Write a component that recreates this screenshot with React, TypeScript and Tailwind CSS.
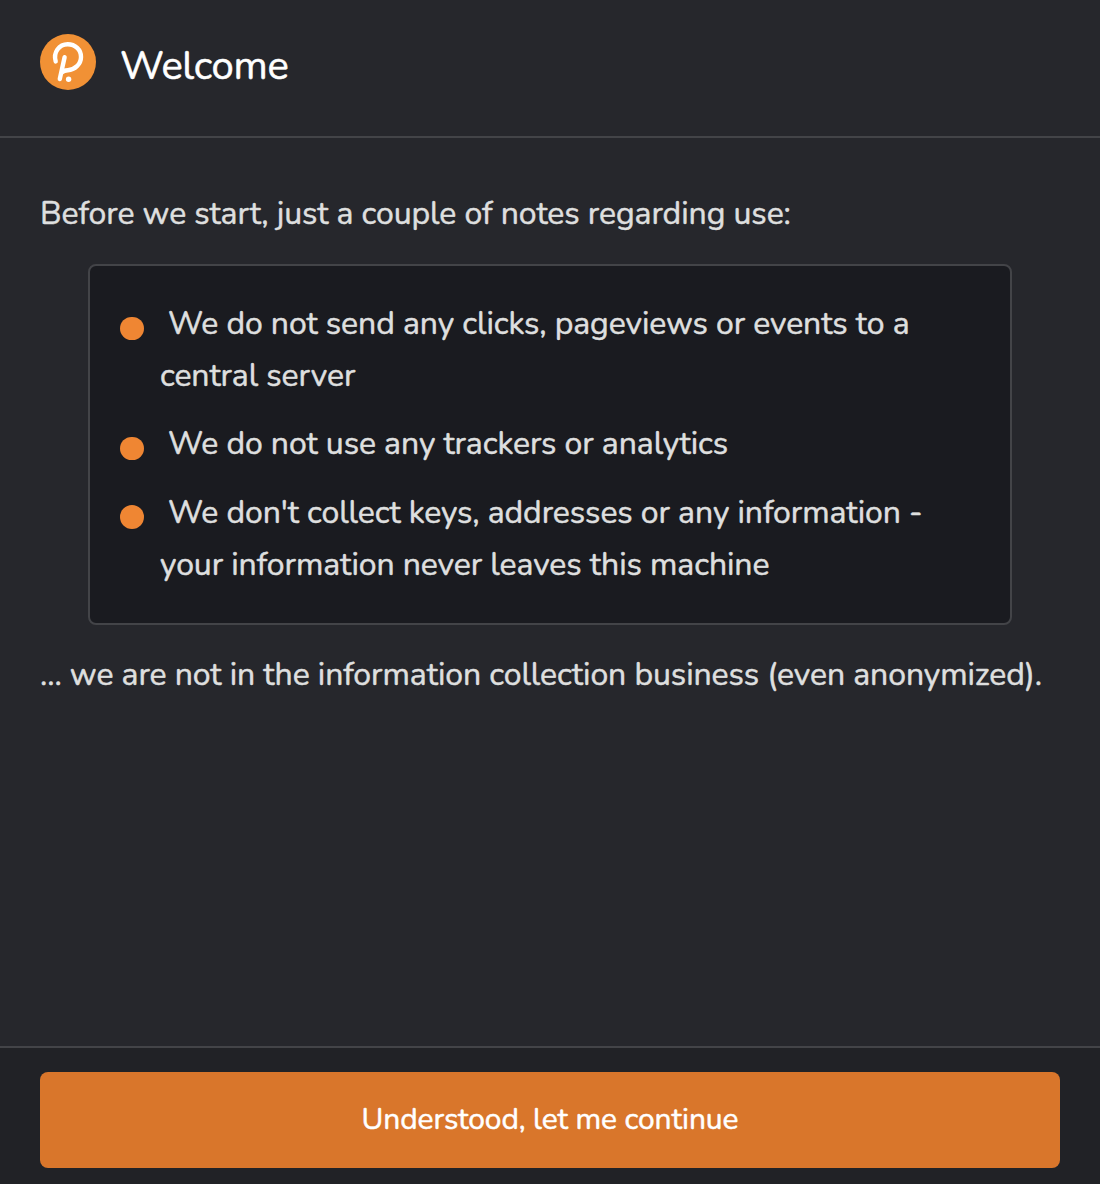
const notes = [
  ['We do not send any clicks, pageviews or events to a', 'central server'],
  ['We do not use any trackers or analytics'],
  ["We don't collect keys, addresses or any information -", 'your information never leaves this machine'],
];

function Logo() {
  return (
    <svg width="56" height="56" viewBox="0 0 56 56" fill="none" className="block shrink-0">
      <circle cx="28" cy="28" r="28" fill="#f19135" />
      <path
        d="M15.7 27.4C13 18.5 19 10.3 27.7 10.3C35.3 10.3 41 15.8 41 23C41 30.3 34.8 35.8 27.8 36.2C25 36.4 23 37.2 21.8 38.6M24.6 23.2L19.8 45"
        stroke="#fff"
        strokeWidth="4.4"
        strokeLinecap="round"
        strokeLinejoin="round"
      />
      <circle cx="28.6" cy="45.2" r="2.7" fill="#fff" />
    </svg>
  );
}

export default function App() {
  return (
    <div className="flex h-[1184px] w-[1100px] flex-col bg-[#26272c] font-[Nunito,Lato,sans-serif] text-[32px] leading-[52px] tracking-[-0.08px] text-[#dedfdf] [-webkit-text-stroke:0.5px_currentColor]">
      <header className="flex h-[138px] shrink-0 items-start gap-6 border-b-2 border-[#434448] px-10 pt-[34px]">
        <Logo />
        <h1 className="pt-1.5 text-[40px] font-normal tracking-[-0.3px] text-white">Welcome</h1>
      </header>
      <main className="flex-1 whitespace-nowrap px-10 pt-[50px]">
        <p>Before we start, just a couple of notes regarding use:</p>
        <ul className="mx-12 mt-6 flex h-[361px] flex-col gap-[16.4px] rounded-lg border-2 border-[#434448] bg-[#1a1b20] pl-[30px] pt-8">
          {notes.map((lines) => (
            <li key={lines[0]} className="flex">
              <span className="mt-[18.5px] mr-[16.5px] size-[23.5px] shrink-0 rounded-full bg-[#ef8633]" />
              <div>
                {lines.map((line, i) => (
                  <p key={line} className={i === 0 ? 'pl-2' : ''}>{line}</p>
                ))}
              </div>
            </li>
          ))}
        </ul>
        <p className="mt-6">... we are not in the information collection business (even anonymized).</p>
      </main>
      <footer className="flex h-[138px] shrink-0 flex-col border-t-2 border-[#434448] bg-[#212226] px-10 pt-6">
        <button className="h-24 rounded-lg bg-[#d9762b] text-[30px] tracking-[-0.12px] text-white">Understood, let me continue</button>
      </footer>
    </div>
  );
}
